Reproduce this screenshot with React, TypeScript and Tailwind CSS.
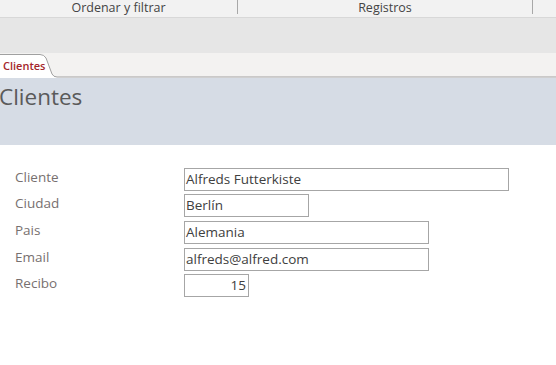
import React from "react";

const font = { fontFamily: '"Open Sans", "Noto Sans", sans-serif' };

const rows: { label: string; value: string; w: string; right?: boolean; mt: string }[] = [
  { label: "Cliente", value: "Alfreds Futterkiste", w: "w-[325px]", mt: "mt-0" },
  { label: "Ciudad", value: "Berlín", w: "w-[125px]", mt: "mt-[3px]" },
  { label: "Pais", value: "Alemania", w: "w-[245px]", mt: "mt-[4px]" },
  { label: "Email", value: "alfreds@alfred.com", w: "w-[245px]", mt: "mt-[4px]" },
  { label: "Recibo", value: "15", w: "w-[65px]", right: true, mt: "mt-[3px]" },
];

export default function App() {
  return (
    <div className="w-[556px] h-[365px] bg-white overflow-hidden" style={font}>
      {/* ribbon group labels */}
      <div className="flex h-[18px] bg-[#f2f2f2] border-b border-[#d8d8d8] text-[12.5px] text-[#444444]">
        <div className="w-[237px] flex items-center justify-center leading-none pb-[1px]">Ordenar y filtrar</div>
        <div className="w-[1px] h-[14px] bg-[#a8a8a8]" />
        <div className="w-[294px] flex items-center justify-center leading-none pb-[1px]">Registros</div>
        <div className="w-[1px] h-[14px] bg-[#a8a8a8]" />
      </div>
      {/* gray band */}
      <div className="h-[35px] bg-[#e6e6e6]" />
      {/* tab strip */}
      <div className="relative h-[25px] bg-[#f3f2f1]">
        <svg className="absolute left-0 top-0" width="556" height="25" viewBox="0 0 556 25">
          <path d="M0 1 H40 Q44 1 46 5 L52 21 Q53.5 24 57 24 H556 V25 H0 Z" fill="#ffffff" />
          <path d="M0 1.5 H40 Q44 1.5 46 5 L52 21 Q53.5 24 57 24 H556" fill="none" stroke="#a0a0a0" strokeWidth="1" />
        </svg>
        <div className="relative pl-[3px] pt-[6px] text-[11px] font-semibold text-[#a4262c] leading-[14px]">
          Clientes
        </div>
      </div>
      {/* header band */}
      <div className="h-[67px] bg-[#d6dce5] pt-[4px]">
        <div className="text-[22.5px] text-[#5a5a5a] leading-[30px] -ml-[1px]">Clientes</div>
      </div>
      {/* detail */}
      <div className="pt-[23px]">
        {rows.map((r) => (
          <div key={r.label} className={`flex items-center h-[23px] ${r.mt}`}>
            <div className="w-[184px] pl-[15px] text-[13.5px] text-[#77706f] leading-none -mt-[4px]">{r.label}</div>
            <div
              className={`${r.w} h-[23px] border border-[#a6a6a6] flex items-center px-[1px] text-[13.5px] text-[#404040] leading-none ${
                r.right ? "justify-end pr-[2px]" : ""
              }`}
            >
              {r.value}
            </div>
          </div>
        ))}
      </div>
    </div>
  );
}
